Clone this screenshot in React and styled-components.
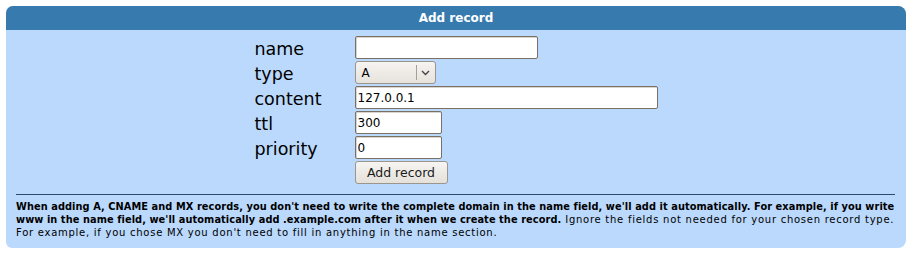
import React from 'react'
import styled, { createGlobalStyle } from 'styled-components'

const GlobalStyle = createGlobalStyle`
  html, body { margin: 0; padding: 0; background: #fff; }
  body { font-family: "DejaVu Sans", Verdana, sans-serif; }
`

const Page = styled.div`
  padding: 6px 8px 7px 6px;
`

const Panel = styled.section`
  background: #bad9fc;
  border-radius: 7px 8px 8px 6px;
  overflow: hidden;
`

const Header = styled.h2`
  margin: 0;
  height: 24px;
  background: #377aae;
  color: #fff;
  font-size: 12px;
  font-weight: bold;
  line-height: 25px;
  text-align: center;
`

const FormTable = styled.div`
  display: grid;
  grid-template-columns: 100px auto;
  grid-auto-rows: 25px;
  justify-content: center;
  padding: 6px 0 0 0;
`

const Label = styled.label`
  font-size: 17.5px;
  line-height: 22px;
  color: #000;
  padding-top: 2px;
`

const Field = styled.div`
  display: flex;
  align-items: flex-start;
`

const TextInput = styled.input`
  box-sizing: border-box;
  width: ${p => p.$w}px;
  height: 23px;
  border: 1px solid #7a7064;
  border-radius: 2px;
  background: #fff;
  font-family: "DejaVu Sans", sans-serif;
  font-size: 12px;
  padding: 1px 2px 0;
  box-shadow: inset 1px 1px 0 #d9d4cd;
  outline: none;
`

const Select = styled.div`
  box-sizing: border-box;
  width: 81px;
  height: 23px;
  display: flex;
  border: 1px solid #9c958c;
  border-radius: 3px;
  background: linear-gradient(#f6f4f1, #e6e2dc);
  font-size: 12px;
`

const SelectValue = styled.span`
  flex: 1;
  padding: 4px 0 0 6px;
`

const SelectArrow = styled.span`
  width: 18px;
  border-left: 1px solid #a7a097;
  margin: 3px 0;
  display: flex;
  align-items: center;
  justify-content: center;
`

const Button = styled.button`
  box-sizing: border-box;
  width: 93px;
  height: 23px;
  border: 1px solid #9c958c;
  border-radius: 3px;
  background: linear-gradient(#f7f5f2, #e4e0da);
  font-family: "DejaVu Sans", sans-serif;
  font-size: 12.5px;
  color: #1a1a1a;
  padding: 0;
`

const Help = styled.div`
  margin: 8px 11px 0 10px;
  border-top: 1px solid #2b4b6d;
  padding: 5px 0 9px;
  font-size: 10px;
  line-height: 13px;
  color: #000;
  letter-spacing: 0.74px;

  b {
    font-size: 9.8px;
    letter-spacing: 0.08px;
  }
`

const rows = [
  { label: 'name', w: 183, value: '' },
  { label: 'type', select: 'A' },
  { label: 'content', w: 303, value: '127.0.0.1' },
  { label: 'ttl', w: 87, value: '300' },
  { label: 'priority', w: 87, value: '0' },
]

export default function App() {
  return (
    <Page>
      <GlobalStyle />
      <Panel>
        <Header>Add record</Header>
        <FormTable>
          {rows.map(r => (
            <React.Fragment key={r.label}>
              <Label>{r.label}</Label>
              <Field>
                {r.select ? (
                  <Select>
                    <SelectValue>{r.select}</SelectValue>
                    <SelectArrow>
                      <svg width="9" height="6" viewBox="0 0 9 6">
                        <path d="M1 1 L4.5 4.5 L8 1" fill="none" stroke="#444" strokeWidth="1.4" />
                      </svg>
                    </SelectArrow>
                  </Select>
                ) : (
                  <TextInput $w={r.w} defaultValue={r.value} />
                )}
              </Field>
            </React.Fragment>
          ))}
          <span />
          <Field>
            <Button>Add record</Button>
          </Field>
        </FormTable>
        <Help>
          <b>When adding A, CNAME and MX records, you don't need to write the complete domain in the name field, we'll add it automatically. For example, if you write www in the name field, we'll automatically add .example.com after it when we create the record.</b>{' '}
          Ignore the fields not needed for your chosen record type. For example, if you chose MX you don't need to fill in anything in the name section.
        </Help>
      </Panel>
    </Page>
  )
}
